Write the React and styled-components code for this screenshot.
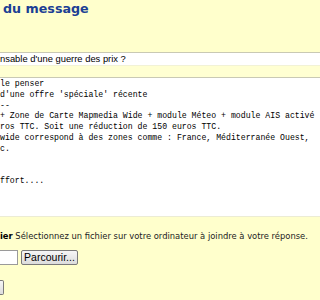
import React from 'react'
import styled, { createGlobalStyle } from 'styled-components'

const GlobalStyle = createGlobalStyle`
body {
    margin: 0;
    background: #ffffcc;
    overflow: hidden;
    font-family: "DejaVu Sans", Verdana, sans-serif;
}
`

const lines = [
    'le penser',
    "d'une offre 'spéciale' récente",
    '--',
    '+ Zone de Carte Mapmedia Wide + module Méteo + module AIS activé',
    'ros TTC. Soit une réduction de 150 euros TTC.',
    'wide correspond à des zones comme : France, Méditerranée Ouest,',
    'c.',
    '',
    '',
    'ffort....',
]

const App = () => {
    return (
        <Page>
            <GlobalStyle />
            <Title>du message</Title>
            <SubjectField>nsable d'une guerre des prix ?</SubjectField>
            <Toolbar />
            <Editor>
                {lines.map((l, i) => (
                    <Line key={i}>{l || '\u00a0'}</Line>
                ))}
            </Editor>
            <FileSection>
                <FileLabel>
                    <strong>ier</strong> Sélectionnez un fichier sur votre ordinateur à joindre à votre réponse.
                </FileLabel>
                <FileRow>
                    <FileInput />
                    <Button>Parcourir...</Button>
                </FileRow>
                <SubmitButton />
            </FileSection>
        </Page>
    )
}

let Page = styled.div`
width: 320px;
height: 300px;
overflow: hidden;
display: flex;
flex-direction: column;
`

let Title = styled.h1`
margin: 0;
padding: 1px 0 0 3px;
height: 52px;
flex-shrink: 0;
box-sizing: border-box;
font-size: 12.7px;
line-height: 16px;
font-weight: bold;
color: #1c3f94;
`

let SubjectField = styled.div`
border-top: 1px solid #c9c9b4;
border-bottom: 1px solid #f2f2d6;
background: #fff;
height: 12px;
flex-shrink: 0;
font-family: "Liberation Sans", Arial, sans-serif;
font-size: 9.4px;
line-height: 12px;
color: #000;
white-space: nowrap;
overflow: hidden;
`

let Toolbar = styled.div`
height: 11px;
flex-shrink: 0;
background: #ffffd2;
`

let Editor = styled.div`
border-top: 1px solid #c9c9b4;
border-bottom: 1px solid #ececd4;
background: #fff;
height: 140px;
flex-shrink: 0;
box-sizing: border-box;
padding-top: 1px;
overflow: hidden;
font-family: "Liberation Mono", "Courier New", monospace;
font-size: 8.2px;
line-height: 10.8px;
color: #000;
`

let Line = styled.div`
white-space: pre;
`

let FileSection = styled.div`
padding-top: 13px;
display: flex;
flex-direction: column;
`

let FileLabel = styled.div`
font-size: 8.4px;
line-height: 12px;
color: #222;
white-space: nowrap;
overflow: hidden;
strong {
    color: #000;
}
`

let FileRow = styled.div`
margin-top: 8px;
display: flex;
align-items: center;
gap: 3px;
`

let FileInput = styled.div`
width: 18px;
height: 15px;
box-sizing: border-box;
background: #fff;
border: 1px solid #9a9a9a;
border-left: none;
`

let Button = styled.div`
width: 57px;
height: 15px;
box-sizing: border-box;
border: 1px solid #7a7a7a;
border-radius: 2px;
background: linear-gradient(#f6f6f6, #dcdcdc);
font-family: "Liberation Sans", Arial, sans-serif;
font-size: 10.5px;
line-height: 13px;
text-align: center;
color: #000;
`

let SubmitButton = styled(Button)`
margin-top: 15px;
width: 4px;
border-left: none;
border-radius: 0 2px 2px 0;
`

export default App
